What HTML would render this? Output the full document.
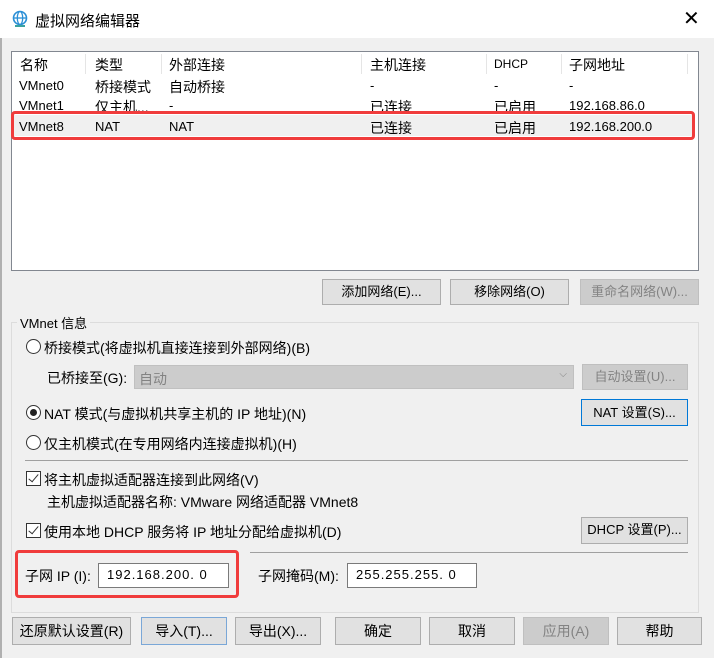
<!DOCTYPE html>
<html><head><meta charset="utf-8"><style>
*{box-sizing:border-box;margin:0;padding:0}
body{width:714px;height:658px;background:#f0f0f0;font-family:"Liberation Sans","Noto Sans CJK SC",sans-serif;font-size:13px;color:#000;position:relative;overflow:hidden}
.a{position:absolute;white-space:nowrap}
.btn{position:absolute;background:#e1e1e1;border:1px solid #adadad;text-align:center;line-height:24px;font-size:13px}
.dis{color:#838383;background:#cccccc;border-color:#bfbfbf}
.radio{position:absolute;width:15px;height:15px;border:1px solid #333;border-radius:50%;background:#fff}
.chk{position:absolute;width:15px;height:15px;border:1px solid #333;background:#fff}
.chk:after{content:"";position:absolute;left:4px;top:0px;width:4px;height:9px;border:solid #333;border-width:0 1.5px 1.5px 0;transform:rotate(40deg)}
.inp{position:absolute;background:#fff;border:1px solid #7a7a7a;line-height:22px;padding-left:8px;letter-spacing:1px}
.sep{position:absolute;height:1px;background:#a0a0a0}
.red{position:absolute;border:3px solid #f03c3c;border-radius:4px}
</style></head><body>
<div class="a" style="left:0;top:0;width:714px;height:38px;background:#fff"></div>
<div class="a" style="left:0;top:38px;width:2px;height:620px;background:#b0b0b0"></div>
<svg class="a" style="left:11px;top:10px" width="18" height="18" viewBox="0 0 18 18"><circle cx="9" cy="8" r="6.5" fill="#fff" stroke="#2b8fd6" stroke-width="1.6"/><ellipse cx="9" cy="8" rx="2.7" ry="6.5" fill="none" stroke="#2b8fd6" stroke-width="1.3"/><line x1="2.5" y1="8" x2="15.5" y2="8" stroke="#2b8fd6" stroke-width="1.3"/><rect x="4" y="15" width="10" height="2" fill="#3aa2a0"/></svg>
<div class="a" style="left:35px;top:10px;font-size:15px">虚拟网络编辑器</div>
<div class="a" style="left:683px;top:6px;font-size:20px;font-weight:300">✕</div>

<div class="a" style="left:11px;top:51px;width:688px;height:220px;background:#fff;border:1px solid #828790"></div>
<div class="a" style="left:85px;top:54px;width:1px;height:20px;background:#e5e5e5"></div>
<div class="a" style="left:161px;top:54px;width:1px;height:20px;background:#e5e5e5"></div>
<div class="a" style="left:361px;top:54px;width:1px;height:20px;background:#e5e5e5"></div>
<div class="a" style="left:486px;top:54px;width:1px;height:20px;background:#e5e5e5"></div>
<div class="a" style="left:561px;top:54px;width:1px;height:20px;background:#e5e5e5"></div>
<div class="a" style="left:687px;top:54px;width:1px;height:20px;background:#e5e5e5"></div>
<div class="a" style="left:20px;top:55px;font-size:14px">名称</div>
<div class="a" style="left:95px;top:55px;font-size:14px">类型</div>
<div class="a" style="left:169px;top:55px;font-size:14px">外部连接</div>
<div class="a" style="left:370px;top:55px;font-size:14px">主机连接</div>
<div class="a" style="left:494px;top:57px;font-size:12px">DHCP</div>
<div class="a" style="left:569px;top:55px;font-size:14px">子网地址</div>
<div class="a" style="left:19px;top:78px">VMnet0</div><div class="a" style="left:95px;top:77px;font-size:14px">桥接模式</div><div class="a" style="left:169px;top:77px;font-size:14px">自动桥接</div><div class="a" style="left:370px;top:78px">-</div><div class="a" style="left:494px;top:78px">-</div><div class="a" style="left:569px;top:78px">-</div>
<div class="a" style="left:19px;top:98px">VMnet1</div><div class="a" style="left:95px;top:97px;font-size:14px">仅主机...</div><div class="a" style="left:169px;top:98px">-</div><div class="a" style="left:370px;top:97px;font-size:14px">已连接</div><div class="a" style="left:494px;top:97px;font-size:14px">已启用</div><div class="a" style="left:569px;top:98px">192.168.86.0</div>
<div class="a" style="left:13px;top:115px;width:680px;height:21px;background:#f0f0f0"></div>
<div class="a" style="left:19px;top:119px">VMnet8</div><div class="a" style="left:95px;top:119px">NAT</div><div class="a" style="left:169px;top:119px">NAT</div><div class="a" style="left:370px;top:118px;font-size:14px">已连接</div><div class="a" style="left:494px;top:118px;font-size:14px">已启用</div><div class="a" style="left:569px;top:119px">192.168.200.0</div>
<div class="red" style="left:11px;top:111px;width:684px;height:29px"></div>

<div class="btn" style="left:322px;top:279px;width:119px;height:26px">添加网络(E)...</div>
<div class="btn" style="left:450px;top:279px;width:119px;height:26px">移除网络(O)</div>
<div class="btn dis" style="left:580px;top:279px;width:119px;height:26px">重命名网络(W)...</div>

<div class="a" style="left:11px;top:322px;width:688px;height:291px;border:1px solid #dcdcdc"></div>
<div class="a" style="left:17px;top:313px;background:#f0f0f0;padding:0 3px">VMnet 信息</div>

<div class="radio" style="left:26px;top:339px"></div>
<div class="a" style="left:44px;top:338px;font-size:14px">桥接模式(将虚拟机直接连接到外部网络)(B)</div>
<div class="a" style="left:47px;top:368px;font-size:14px">已桥接至(G):</div>
<div class="a" style="left:134px;top:365px;width:440px;height:24px;background:#cccccc;border:1px solid #c0c0c0;color:#838383;padding:3px 4px;font-size:14px">自动<span style="position:absolute;right:6px;top:3px;font-size:10px">⌵</span></div>
<div class="btn dis" style="left:582px;top:364px;width:106px;height:26px">自动设置(U)...</div>

<div class="radio" style="left:26px;top:405px"></div>
<div class="a" style="left:30px;top:409px;width:7px;height:7px;border-radius:50%;background:#222"></div>
<div class="a" style="left:44px;top:404px;font-size:14px">NAT 模式(与虚拟机共享主机的 IP 地址)(N)</div>
<div class="btn" style="left:581px;top:399px;width:107px;height:27px;border:1px solid #0078d7;line-height:25px">NAT 设置(S)...</div>

<div class="radio" style="left:26px;top:435px"></div>
<div class="a" style="left:44px;top:434px;font-size:14px">仅主机模式(在专用网络内连接虚拟机)(H)</div>

<div class="sep" style="left:25px;top:460px;width:663px"></div>
<div class="chk" style="left:26px;top:471px"></div>
<div class="a" style="left:44px;top:470px;font-size:14px">将主机虚拟适配器连接到此网络(V)</div>
<div class="a" style="left:47px;top:492px;font-size:14px">主机虚拟适配器名称: VMware 网络适配器 VMnet8</div>

<div class="chk" style="left:26px;top:523px"></div>
<div class="a" style="left:44px;top:522px;font-size:14px">使用本地 DHCP 服务将 IP 地址分配给虚拟机(D)</div>
<div class="btn" style="left:581px;top:517px;width:107px;height:27px">DHCP 设置(P)...</div>

<div class="sep" style="left:250px;top:552px;width:438px"></div>
<div class="a" style="left:25px;top:566px;font-size:14px">子网 IP (I):</div>
<div class="inp" style="left:98px;top:563px;width:131px;height:25px">192.168.200. 0</div>
<div class="red" style="left:15px;top:550px;width:224px;height:48px"></div>
<div class="a" style="left:258px;top:566px;font-size:14px">子网掩码(M):</div>
<div class="inp" style="left:347px;top:563px;width:130px;height:25px">255.255.255. 0</div>

<div class="btn" style="left:12px;top:617px;width:119px;height:28px;line-height:26px;font-size:14px">还原默认设置(R)</div>
<div class="btn" style="left:141px;top:617px;width:86px;height:28px;line-height:26px;font-size:14px;border-color:#7aa7d7">导入(T)...</div>
<div class="btn" style="left:235px;top:617px;width:86px;height:28px;line-height:26px;font-size:14px">导出(X)...</div>
<div class="btn" style="left:335px;top:617px;width:86px;height:28px;line-height:26px;font-size:14px">确定</div>
<div class="btn" style="left:429px;top:617px;width:86px;height:28px;line-height:26px;font-size:14px">取消</div>
<div class="btn dis" style="left:523px;top:617px;width:86px;height:28px;line-height:26px;font-size:14px">应用(A)</div>
<div class="btn" style="left:617px;top:617px;width:85px;height:28px;line-height:26px;font-size:14px">帮助</div>
</body></html>
